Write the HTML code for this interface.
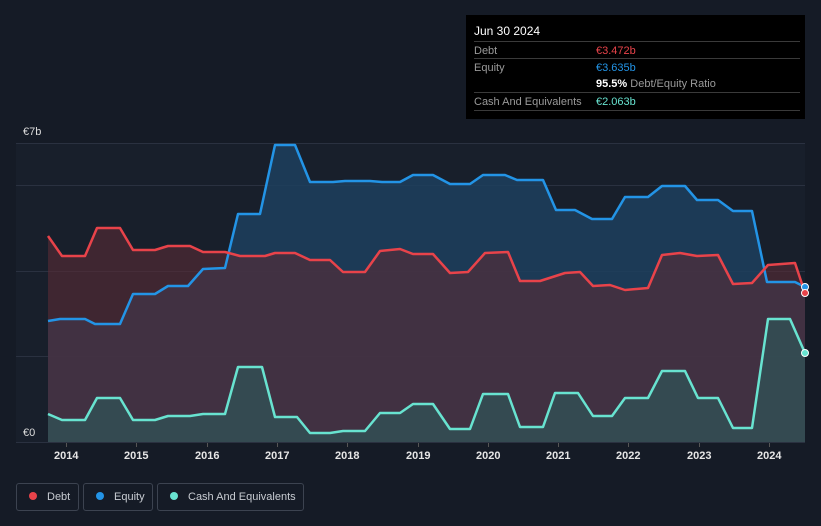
<html><head><style>
html,body{margin:0;background:#151b26;width:821px;height:526px;overflow:hidden;font-family:"Liberation Sans",sans-serif;position:relative}
.tt{position:absolute;left:466px;top:15px;width:339px;height:104px;background:#000;color:#fff;font-size:11px}
.row{position:absolute;left:8px;width:326px;border-top:1px solid #3a3a3a;height:18px;line-height:18px;color:#9a9a9a}
.v{position:absolute;left:122px}
.leg{position:absolute;top:483px;height:28px;border:1px solid #3c4350;border-radius:3px;color:#c8ccd2;font-size:11px;line-height:26px;box-sizing:border-box;white-space:nowrap}
.dot{display:inline-block;width:8px;height:8px;border-radius:50%;margin:0 10px 0 12px;vertical-align:0px}
.ax{position:absolute;top:450px;color:#e6e6e6;font-size:11px;font-weight:bold}
</style></head><body>
<svg width="821" height="526" style="position:absolute;left:0;top:0">
<rect x="16" y="143" width="789" height="299" fill="#181f2b"/>
<g stroke="#2a3140" stroke-width="1"><line x1="16" x2="805" y1="143.5" y2="143.5"/><line x1="16" x2="805" y1="185.5" y2="185.5"/><line x1="16" x2="805" y1="271.5" y2="271.5"/><line x1="16" x2="805" y1="356.5" y2="356.5"/><line x1="16" x2="805" y1="442.5" y2="442.5"/></g>
<path fill="#1d3f5e" fill-opacity="0.85" d="M48,442 L48,321 60,319 85,319 95,324 120,324 133,294 155,294 168,286 188,286 203,269 225,268 238,214 260,214 275,145 295,145 310,182 333,182 345,181 370,181 382,182 400,182 413,175 433,175 450,184 470,184 483,175 505,175 517,180 543,180 556,210 575,210 592,219 612,219 625,197 648,197 662,186 685,186 697,200 718,200 733,211 752,211 767,282 795,282 805,287 805,442Z"/>
<path fill="#5a2c35" fill-opacity="0.6" d="M48,442 L48,236 62,256 85,256 97,228 120,228 133,250 155,250 168,246 190,246 203,252 225,252 240,256 265,256 275,253 295,253 310,260 330,260 343,272 365,272 380,251 400,249 413,254 433,254 450,273 468,272 485,253 508,252 520,281 540,281 565,273 580,272 593,286 610,285 625,290 648,288 662,255 680,253 697,256 718,255 733,284 752,283 768,265 795,263 805,293 805,442Z"/>
<path fill="#2f5558" fill-opacity="0.7" d="M48,442 L48,414 62,420 85,420 97,398 120,398 133,420 155,420 168,416 190,416 203,414 225,414 238,367 262,367 275,417 297,417 310,433 330,433 343,431 365,431 380,413 400,413 413,404 433,404 450,429 470,429 483,394 508,394 520,427 543,427 555,393 578,393 593,416 612,416 625,398 648,398 662,371 685,371 698,398 718,398 733,428 752,428 768,319 790,319 805,353 805,442Z"/>
<g fill="none" stroke-width="2.5" stroke-linejoin="round">
<path stroke="#2394e6" d="M48,321 60,319 85,319 95,324 120,324 133,294 155,294 168,286 188,286 203,269 225,268 238,214 260,214 275,145 295,145 310,182 333,182 345,181 370,181 382,182 400,182 413,175 433,175 450,184 470,184 483,175 505,175 517,180 543,180 556,210 575,210 592,219 612,219 625,197 648,197 662,186 685,186 697,200 718,200 733,211 752,211 767,282 795,282 805,287"/>
<path stroke="#e8434a" d="M48,236 62,256 85,256 97,228 120,228 133,250 155,250 168,246 190,246 203,252 225,252 240,256 265,256 275,253 295,253 310,260 330,260 343,272 365,272 380,251 400,249 413,254 433,254 450,273 468,272 485,253 508,252 520,281 540,281 565,273 580,272 593,286 610,285 625,290 648,288 662,255 680,253 697,256 718,255 733,284 752,283 768,265 795,263 805,293"/>
<path stroke="#68e3d0" d="M48,414 62,420 85,420 97,398 120,398 133,420 155,420 168,416 190,416 203,414 225,414 238,367 262,367 275,417 297,417 310,433 330,433 343,431 365,431 380,413 400,413 413,404 433,404 450,429 470,429 483,394 508,394 520,427 543,427 555,393 578,393 593,416 612,416 625,398 648,398 662,371 685,371 698,398 718,398 733,428 752,428 768,319 790,319 805,353"/>
</g>
<circle cx="805" cy="287" r="3.5" fill="#2394e6" stroke="#fff" stroke-width="1"/>
<circle cx="805" cy="293" r="3.5" fill="#e8434a" stroke="#fff" stroke-width="1"/>
<circle cx="805" cy="353" r="3.5" fill="#68e3d0" stroke="#fff" stroke-width="1"/>
<g stroke="#555" stroke-width="1"><line x1="66.5" x2="66.5" y1="443" y2="447"/><line x1="136.5" x2="136.5" y1="443" y2="447"/><line x1="207.5" x2="207.5" y1="443" y2="447"/><line x1="277.5" x2="277.5" y1="443" y2="447"/><line x1="347.5" x2="347.5" y1="443" y2="447"/><line x1="418.5" x2="418.5" y1="443" y2="447"/><line x1="488.5" x2="488.5" y1="443" y2="447"/><line x1="558.5" x2="558.5" y1="443" y2="447"/><line x1="628.5" x2="628.5" y1="443" y2="447"/><line x1="699.5" x2="699.5" y1="443" y2="447"/><line x1="769.5" x2="769.5" y1="443" y2="447"/></g>
<text x="23" y="135" fill="#ddd" font-size="11" font-family="Liberation Sans">€7b</text>
<text x="23" y="436" fill="#ddd" font-size="11" font-family="Liberation Sans">€0</text>
</svg>
<div class="ax" style="left:54px">2014</div><div class="ax" style="left:124px">2015</div><div class="ax" style="left:195px">2016</div><div class="ax" style="left:265px">2017</div><div class="ax" style="left:335px">2018</div><div class="ax" style="left:406px">2019</div><div class="ax" style="left:476px">2020</div><div class="ax" style="left:546px">2021</div><div class="ax" style="left:616px">2022</div><div class="ax" style="left:687px">2023</div><div class="ax" style="left:757px">2024</div>
<div class="tt">
<div style="position:absolute;left:8px;top:9px;font-size:12px">Jun 30 2024</div>
<div class="row" style="top:26px">Debt<span class="v" style="color:#e8434a">€3.472b</span></div>
<div class="row" style="top:43px">Equity<span class="v" style="color:#2394e6">€3.635b</span></div>
<div class="row" style="top:60px;border-top:none"><span class="v" style="color:#fff"><b>95.5%</b> <span style="color:#9a9a9a">Debt/Equity Ratio</span></span></div>
<div class="row" style="top:77px">Cash And Equivalents<span class="v" style="color:#68e3d0">€2.063b</span></div>
<div class="row" style="top:95px;height:0"></div>
</div>
<div class="leg" style="left:16px;width:63px"><span class="dot" style="background:#e8434a"></span>Debt</div>
<div class="leg" style="left:83px;width:70px"><span class="dot" style="background:#2394e6"></span>Equity</div>
<div class="leg" style="left:157px;width:147px"><span class="dot" style="background:#68e3d0"></span>Cash And Equivalents</div>
</body></html>
